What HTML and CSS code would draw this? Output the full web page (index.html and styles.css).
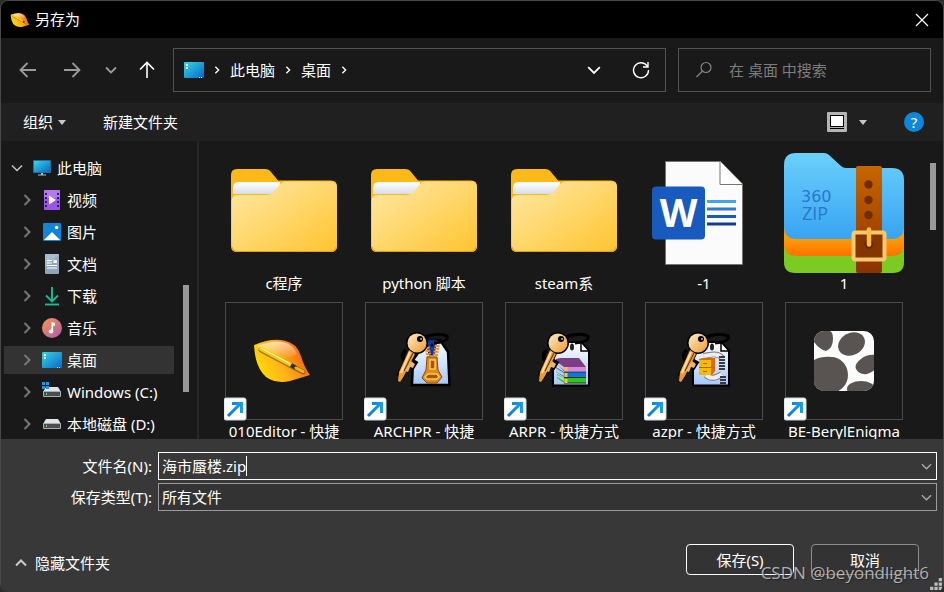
FILE: index.html
```html
<!DOCTYPE html>
<html lang="zh-CN">
<head>
    <meta charset="UTF-8">
    <meta name="viewport" content="width=device-width, initial-scale=1.0">
    <title>另存为</title>
    <link rel="stylesheet" href="styles.css">
</head>
<body>
    <!-- shared icons -->
    <svg class="defs" width="0" height="0" aria-hidden="true">
        <defs>
            <linearGradient id="gFolder" x1="0" y1="0" x2="1" y2="1"><stop offset="0" stop-color="#ffe8a6"/><stop offset="1" stop-color="#ffc530"/></linearGradient>
            <linearGradient id="gPaper" x1="0" y1="0" x2="0" y2="1"><stop offset="0" stop-color="#fff"/><stop offset="1" stop-color="#d5dbe3"/></linearGradient>
            <linearGradient id="gScreen" x1="0" y1="0" x2="1" y2="1"><stop offset="0" stop-color="#35d6e6"/><stop offset="1" stop-color="#0a66c8"/></linearGradient>
            <linearGradient id="gLeaf" x1="0" y1="0.7" x2="1" y2="0.3"><stop offset="0" stop-color="#ffe000"/><stop offset="0.45" stop-color="#ffb21c"/><stop offset="1" stop-color="#f0560c"/></linearGradient>
            <linearGradient id="gShine" x1="0" y1="0" x2="0" y2="1"><stop offset="0" stop-color="#fff" stop-opacity="0.65"/><stop offset="1" stop-color="#fff" stop-opacity="0.05"/></linearGradient>
            <linearGradient id="gKey" x1="0" y1="0" x2="1" y2="1"><stop offset="0" stop-color="#ffeccb"/><stop offset="1" stop-color="#f09a2c"/></linearGradient>
            <linearGradient id="gSheet" x1="0" y1="0" x2="0" y2="1"><stop offset="0" stop-color="#fff"/><stop offset="1" stop-color="#a4c6ff"/></linearGradient>
            <linearGradient id="gZipBlue" x1="0" y1="0" x2="0" y2="1"><stop offset="0" stop-color="#6bd0fb"/><stop offset="1" stop-color="#38a4f2"/></linearGradient>
            <linearGradient id="gStrap" x1="0" y1="0" x2="0" y2="1"><stop offset="0" stop-color="#c76600"/><stop offset="1" stop-color="#8a3200"/></linearGradient>
            <linearGradient id="gOrange" x1="0" y1="0.5" x2="0" y2="1"><stop offset="0" stop-color="#ff9a08"/><stop offset="1" stop-color="#ff7200"/></linearGradient>
            <linearGradient id="gArrow" x1="0" y1="0" x2="1" y2="0"><stop offset="0" stop-color="#0b7cd8"/><stop offset="1" stop-color="#1b9be8"/></linearGradient>
        </defs>
        <symbol id="folder" viewBox="0 0 120 120">
            <path d="M7 94V22q0-6 6-6h28q4 0 6 3l7 8.500h53q6 0 6 6V93q0 6-6 6H13q-6 0-6-6z" fill="#fdb917"/>
            <path d="M9 42v-7q0-6 5-6h42v12H9z" fill="url(#gPaper)"/>
            <path d="M7.500 49q0-7 6-7h29q4 0 7-3l5-6q3-4.500 7-4.500h45.500q6 0 6 6V92q0 6-6 6H13.500q-6 0-6-6z" fill="url(#gFolder)"/>
            <path d="M8 94q1 4.500 6 4.500h92q5 0 6-4.500" fill="none" stroke="#e5a01b"/>
        </symbol>
        <symbol id="leaf" viewBox="28 36 60 48">
            <path d="M30 44Q47 37 60 39.500Q73 42 77 55Q80 66 86 74Q76 77 66 80Q52 83 42 76Q31 66 30 44z" fill="url(#gLeaf)"/>
            <path d="M33 45Q48 39 59 41Q69 43 73 53Q60 61 40 52z" fill="url(#gShine)"/>
            <path d="M37 49L79 71" stroke="#8a5200" stroke-width="5" stroke-linecap="round" opacity="0.7"/>
            <path d="M37 48L67 64" stroke="#eccb1d" stroke-width="4" stroke-linecap="round"/>
            <path d="M37 47L66 62.500" stroke="#fff58a" stroke-width="1.200"/>
            <path d="M67 64L72 67" stroke="#24303c" stroke-width="4"/>
            <path d="M72 67L79 70.500" stroke="#e9b71b" stroke-width="3" stroke-linecap="round"/>
        </symbol>
        <symbol id="key" viewBox="0 0 120 120">
            <path d="M62 36q14-5 22-1q2 6-13 7" fill="none" stroke="#000" stroke-width="3"/>
            <path d="M43 49q-6 5-1 11" fill="none" stroke="#000" stroke-width="4"/>
            <path d="M50 50L37 76M47 67l5-8" stroke="#000" stroke-width="8"/>
            <circle cx="54" cy="42" r="11" fill="#000"/>
            <path d="M46 49l6 4-11 22-4 6-2-1 1-9z" fill="#ec9a31"/>
            <path d="M47 51L38 72" stroke="#ffe0ad" stroke-width="2"/>
            <path d="M50 52L41 70" stroke="#4b2b0a" stroke-width="1"/>
            <path d="M48 60l4 3-2 4-3-1-2 5-3-1z" fill="#e8b57a"/>
            <circle cx="54" cy="42" r="9.500" fill="url(#gKey)"/>
            <circle cx="57" cy="38" r="3" fill="#000"/>
            <circle cx="58" cy="38" r="1" fill="#bbb"/>
        </symbol>
        <symbol id="shortcut" viewBox="0 0 120 120">
            <rect x="0" y="97" width="22" height="22" rx="2" fill="#fff" stroke="#cfd6df"/>
            <path d="M4 115L16 103M8 102.500h9.500v9.500" fill="none" stroke="url(#gArrow)" stroke-width="3"/>
        </symbol>
        <symbol id="desktop" viewBox="0 0 20 16">
            <rect width="20" height="16" rx="1" fill="url(#gScreen)"/>
            <path d="M2 2h2v2H2zM2 5h2v2H2z" fill="#fff"/>
            <path d="M15 15h1v1h-1zM17 15h1v1h-1z" fill="#fff"/>
        </symbol>
        <symbol id="drive" viewBox="0 0 20 20">
            <path d="M4 5h12l3 5H1z" fill="#e1e4e8"/>
            <rect x="1" y="9" width="18" height="6" rx="1" fill="#a9acb0"/>
            <rect x="2" y="10" width="16" height="4" fill="#4b4d50"/>
            <rect x="4" y="11" width="1" height="2" fill="#4be05a"/>
        </symbol>
        <symbol id="chevron" viewBox="0 0 12 12">
            <path d="M3.500 1L8.500 6L3.500 11" fill="none" stroke="currentColor" stroke-width="2"/>
        </symbol>
        <symbol id="down" viewBox="0 0 12 12">
            <path d="M1 3.500L6 8.500L11 3.500" fill="none" stroke="currentColor" stroke-width="1.500"/>
        </symbol>
    </svg>

    <div class="dialog">
        <header class="titlebar">
            <svg class="app-icon"><use href="#leaf"/></svg>
            <h1>另存为</h1>
            <button class="close" aria-label="关闭">
                <svg width="14" height="14" viewBox="0 0 14 14"><path d="M1 1l12 12M13 1L1 13" stroke="#fff" stroke-width="1.200"/></svg>
            </button>
        </header>

        <div class="navbar">
            <div class="nav-buttons">
                <button class="muted" aria-label="后退"><svg width="18" height="18" viewBox="0 0 18 18"><path d="M17 9H2M8.500 2L1.500 9l7 7" fill="none" stroke="currentColor" stroke-width="1.800"/></svg></button>
                <button class="muted" aria-label="前进"><svg width="18" height="18" viewBox="0 0 18 18"><path d="M1 9h15M9.500 2l7 7-7 7" fill="none" stroke="currentColor" stroke-width="1.800"/></svg></button>
                <button class="muted narrow" aria-label="最近位置"><svg width="12" height="12" viewBox="0 0 12 12"><path d="M1 3.500L6 8.500L11 3.500" fill="none" stroke="currentColor" stroke-width="1.800"/></svg></button>
                <button aria-label="向上"><svg width="18" height="18" viewBox="0 0 18 18"><path d="M9 17V2M2 8.500l7-7 7 7" fill="none" stroke="currentColor" stroke-width="1.600"/></svg></button>
            </div>
            <div class="address">
                <svg width="20" height="16"><use href="#desktop"/></svg>
                <svg class="crumb-arrow"><use href="#chevron"/></svg>
                <button>此电脑</button>
                <svg class="crumb-arrow"><use href="#chevron"/></svg>
                <button>桌面</button>
                <svg class="crumb-arrow"><use href="#chevron"/></svg>
                <button class="history" aria-label="历史"><svg width="14" height="14"><use href="#down"/></svg></button>
                <button class="refresh" aria-label="刷新"><svg width="18" height="18" viewBox="0 0 18 18"><path d="M15.500 5.500A7.500 7.500 0 1 0 16.500 9M16 1v5h-5" fill="none" stroke="#fff" stroke-width="1.400"/></svg></button>
            </div>
            <label class="search">
                <svg width="18" height="18" viewBox="0 0 18 18"><circle cx="11" cy="6.500" r="5" fill="none" stroke="#858585" stroke-width="1.200"/><path d="M7.500 10L1.500 16" stroke="#858585" stroke-width="1.200"/></svg>
                <input type="text" placeholder="在 桌面 中搜索" aria-label="在 桌面 中搜索">
            </label>
        </div>

        <div class="toolbar">
            <button>组织<span class="caret"></span></button>
            <button>新建文件夹</button>
            <button class="view" aria-label="视图">
                <svg width="20" height="20" viewBox="0 0 20 20"><rect width="20" height="20" rx="1" fill="#b4b4b4"/><rect x="3.500" y="3.500" width="13" height="11" fill="#fff" stroke="#000"/><path d="M3 16.500h14" stroke="#000"/></svg>
                <span class="caret"></span>
            </button>
            <button class="help" aria-label="帮助">?</button>
        </div>

        <main class="content">
            <nav class="sidebar">
                <ul class="tree">
                    <li class="root"><svg class="twist"><use href="#down"/></svg>
                        <svg class="icon" viewBox="0 0 20 20"><rect x="1" y="2" width="18" height="13" rx="1" fill="#1c6f9f"/><rect x="2" y="3" width="16" height="11" fill="url(#gScreen)"/><path d="M9 15h2v1.500h3v1H6v-1h3z" fill="#b3bcc4"/></svg>
                        <a href="#">此电脑</a></li>
                    <li><svg class="twist"><use href="#chevron"/></svg>
                        <svg class="icon" viewBox="0 0 20 20"><rect x="2" width="16" height="20" rx="1" fill="#9a57e8"/><path d="M2 1q0-1 1-1h14q1 0 1 1v7H2z" fill="#b07af2"/><path d="M4 3v15M16 3v15" stroke="#3a1a6e" stroke-width="2" stroke-dasharray="2 2"/><path d="M7 5.500l7 4.500-7 4.500z" fill="#fff"/></svg>
                        <a href="#">视频</a></li>
                    <li><svg class="twist"><use href="#chevron"/></svg>
                        <svg class="icon" viewBox="0 0 20 20"><rect x="1" y="1" width="18" height="18" rx="1" fill="#1484d6"/><path d="M2 18L10 10l8 8z" fill="#fff"/><circle cx="14.500" cy="5.500" r="1.700" fill="#fff"/></svg>
                        <a href="#">图片</a></li>
                    <li><svg class="twist"><use href="#chevron"/></svg>
                        <svg class="icon" viewBox="0 0 20 20"><rect x="3" width="14" height="20" rx="1" fill="#8fa6bd"/><path d="M3 1q0-1 1-1h12q1 0 1 1L3 13z" fill="#a9bbcc"/><path d="M5 6.500h5M5 9h5M5 11.500h10M5 14h10" stroke="#fff" stroke-width="1.200"/><rect x="11.500" y="6" width="3.500" height="3" fill="#fff"/></svg>
                        <a href="#">文档</a></li>
                    <li><svg class="twist"><use href="#chevron"/></svg>
                        <svg class="icon" viewBox="0 0 20 20"><path d="M10 1v14M4 9.500l6 6 6-6" fill="none" stroke="#20b893" stroke-width="1.900"/><path d="M3 18.500h14" stroke="#20b893" stroke-width="1.900"/></svg>
                        <a href="#">下载</a></li>
                    <li><svg class="twist"><use href="#chevron"/></svg>
                        <svg class="icon" viewBox="0 0 20 20"><defs><linearGradient id="gMusic" x1="0" y1="0" x2="1" y2="1"><stop offset="0.100" stop-color="#f59256"/><stop offset="1" stop-color="#a45bb0"/></linearGradient></defs><circle cx="10" cy="10" r="10" fill="url(#gMusic)"/><ellipse cx="9" cy="13.500" rx="2.300" ry="2" fill="#fff"/><path d="M9.500 4l3.500 1v3l-2-.6v6.100H9.500z" fill="#fff"/></svg>
                        <a href="#">音乐</a></li>
                    <li class="selected"><svg class="twist"><use href="#chevron"/></svg>
                        <svg class="icon" viewBox="0 0 20 20"><use href="#desktop" y="2" width="20" height="16"/></svg>
                        <a href="#">桌面</a></li>
                    <li><svg class="twist"><use href="#chevron"/></svg>
                        <svg class="icon" viewBox="0 0 20 20"><use href="#drive" width="20" height="20"/><path d="M0 0h3v3H0zM4 0h3v3H4zM0 4h3v3H0zM4 4h3v3H4z" fill="#1b97e6"/></svg>
                        <a href="#">Windows (C:)</a></li>
                    <li><svg class="twist"><use href="#chevron"/></svg>
                        <svg class="icon" viewBox="0 0 20 20"><use href="#drive" width="20" height="20"/></svg>
                        <a href="#">本地磁盘 (D:)</a></li>
                </ul>
                <div class="scrollbar side-scroll"><div class="thumb"></div></div>
            </nav>

            <section class="files">
                <figure>
                    <svg class="thumbnail"><use href="#folder"/></svg>
                    <figcaption>c程序</figcaption>
                </figure>
                <figure>
                    <svg class="thumbnail"><use href="#folder"/></svg>
                    <figcaption>python 脚本</figcaption>
                </figure>
                <figure>
                    <svg class="thumbnail"><use href="#folder"/></svg>
                    <figcaption>steam系</figcaption>
                </figure>
                <figure>
                    <svg class="thumbnail" viewBox="0 0 120 120">
                        <path d="M21.500 8.500h55L98.500 31v80.500h-77z" fill="#fbfbfb" stroke="#76746f"/>
                        <path d="M76 8.500V31.500h22.500" fill="#fff" stroke="#76746f"/>
                        <path d="M63 48.500h29" stroke="#41a5ee" stroke-width="3"/>
                        <path d="M63 56h29" stroke="#2b7cd3" stroke-width="3"/>
                        <path d="M63 63.500h29" stroke="#185abd" stroke-width="3"/>
                        <path d="M63 71h29" stroke="#103f91" stroke-width="3"/>
                        <rect x="8" y="33.500" width="53" height="53" rx="4" fill="#185abd"/>
                        <text class="word-letter" x="34.500" y="74" text-anchor="middle">W</text>
                    </svg>
                    <figcaption>-1</figcaption>
                </figure>
                <figure>
                    <svg class="thumbnail" viewBox="0 0 120 120">
                        <path d="M0 70h120v39q0 11-11 11H11q-11 0-11-11z" fill="#7ccb22"/>
                        <path d="M0 70h120v21q0 12-13 12H13Q0 103 0 91z" fill="url(#gOrange)"/>
                        <path d="M0 12Q0 0 12 0h28q3 0 5 2l12 11q2 2 5 2h46q12 0 12 12v46q0 13-13 13H13Q0 86 0 73z" fill="url(#gZipBlue)"/>
                        <text class="zip-360" x="17" y="49">360</text>
                        <text class="zip-name" x="18" y="67">ZIP</text>
                        <rect x="72" y="13" width="26" height="107" rx="2" fill="url(#gStrap)"/>
                        <g fill="#702b00"><circle cx="84.500" cy="31.500" r="4.200"/><circle cx="84.500" cy="47" r="4.200"/><circle cx="84.500" cy="62" r="4.200"/></g>
                        <rect x="69.500" y="79.500" width="31" height="27" rx="2" fill="#843600" stroke="#fdc76c" stroke-width="4"/>
                        <circle cx="85" cy="91" r="4.500" fill="#642600"/>
                        <path d="M85 76.500v15" stroke="#f9bd45" stroke-width="4.500" stroke-linecap="round"/>
                    </svg>
                    <figcaption>1</figcaption>
                </figure>
                <figure>
                    <svg class="thumbnail framed" viewBox="0 0 120 120">
                        <use href="#leaf" x="28" y="36" width="60" height="48"/>
                        <use href="#shortcut" width="120" height="120"/>
                    </svg>
                    <figcaption>010Editor - 快捷</figcaption>
                </figure>
                <figure>
                    <svg class="thumbnail framed" viewBox="0 0 120 120">
                        <path d="M48 84l1-25 14-20h13l8 12 1.500 33z" fill="url(#gSheet)" stroke="#000" stroke-width="2.500"/>
                        <path d="M62 39h11l-3 15h-5z" fill="#123c9c" stroke="#071a4c"/>
                        <path d="M63 46l2 10M74 41l-3 15" stroke="#e8932b" stroke-width="5" stroke-dasharray="2 1"/>
                        <path d="M63 56h10l1 13 4 7-5 6H63l-5-5 4-8z" fill="#e58a1a" stroke="#8c4a08"/>
                        <path d="M66 59h5v9h-5zM64 73h9l2 3-2 2H63l-2-2z" fill="#a3560e" stroke="#ffc95a" stroke-width="1.500"/>
                        <use href="#key" x="-1" width="120" height="120"/>
                        <circle cx="68" cy="44" r="1.500" fill="#000"/>
                        <use href="#shortcut" width="120" height="120"/>
                    </svg>
                    <figcaption>ARCHPR - 快捷</figcaption>
                </figure>
                <figure>
                    <svg class="thumbnail framed" viewBox="0 0 120 120">
                        <path d="M49 84.500V48l8-7h20l8 9v34.500z" fill="url(#gSheet)" stroke="#000" stroke-width="2"/>
                        <path d="M77 42v8h7" fill="#fff" stroke="#000" stroke-width="1.500"/>
                        <path d="M52 58l4-1h19l7 9v4H60l-8-7z" fill="#7b3f87"/>
                        <path d="M60 66h22v4H60z" fill="#e184d8"/>
                        <path d="M52 66l8 5h22v5H60l-8-5z" fill="#1378d8"/>
                        <path d="M53 73l7 4h22v5H60l-7-5z" fill="#32c80e"/>
                        <path d="M52 60l8 6v3l-8-5zM52 67l8 5v3l-8-4zM53 74l7 3v3l-7-4z" fill="#c6c9d5"/>
                        <path d="M60 71h22M60 76.500h22M60 82h22" stroke="#252843"/>
                        <path d="M62 66v4M62 72v4M62 78v4" stroke="#ffc43c" stroke-width="3"/>
                        <use href="#key" width="120" height="120"/>
                        <ellipse cx="68" cy="46" rx="2" ry="3.500" fill="#222"/>
                        <use href="#shortcut" width="120" height="120"/>
                    </svg>
                    <figcaption>ARPR - 快捷方式</figcaption>
                </figure>
                <figure>
                    <svg class="thumbnail framed" viewBox="0 0 120 120">
                        <path d="M49 84.500V48l8-7h20l8 9v34.500z" fill="url(#gSheet)" stroke="#000" stroke-width="2"/>
                        <path d="M77 42v8h7" fill="#fff" stroke="#000" stroke-width="1.500"/>
                        <path d="M60 55q14-4 18 2M62 74q6 6 16-1" fill="none" stroke="#777" stroke-width="6"/>
                        <path d="M60 55q14-4 18 2M62 74q6 6 16-1" fill="none" stroke="#ededed" stroke-width="4"/>
                        <path d="M78 55v14M79 75v9" stroke="#383a42" stroke-width="6" stroke-dasharray="2 1"/>
                        <path d="M55 58l4-1h12v13l-3 4H55z" fill="#d96a00"/>
                        <rect x="55" y="59" width="12" height="15" fill="#f7ba05"/>
                        <path d="M55 66.500h12M59 62.500h4M59 70.500h4" stroke="#a96500"/>
                        <use href="#key" width="120" height="120"/>
                        <ellipse cx="68" cy="46" rx="2" ry="3.500" fill="#222"/>
                        <use href="#shortcut" width="120" height="120"/>
                    </svg>
                    <figcaption>azpr - 快捷方式</figcaption>
                </figure>
                <figure>
                    <svg class="thumbnail framed" viewBox="0 0 120 120">
                        <clipPath id="tile"><rect x="30" y="30" width="60" height="60" rx="10"/></clipPath>
                        <g clip-path="url(#tile)">
                            <rect x="30" y="30" width="60" height="60" fill="#fcfcfc"/>
                            <g fill="#595452">
                                <path d="M28 30h18q3 1 3 8 0 9-7 12-6-1-12-9z"/>
                                <ellipse cx="67.500" cy="43" rx="14" ry="11" transform="rotate(-28 67.500 43)"/>
                                <ellipse cx="46" cy="74" rx="18" ry="18"/>
                                <path d="M28 60q8-5 20-4 10 1 14 10 3 8-2 16l-7 10H28z"/>
                                <path d="M92 54q-9-1-15 4-7 5-5 10 3 6 11 5 5-2 9-5z"/>
                                <ellipse cx="77" cy="88" rx="14" ry="8"/>
                            </g>
                        </g>
                        <use href="#shortcut" width="120" height="120"/>
                    </svg>
                    <figcaption>BE-BerylEnigma</figcaption>
                </figure>
            </section>
            <div class="scrollbar file-scroll"><div class="thumb"></div></div>
        </main>

        <footer class="footer">
            <div class="field-row">
                <label for="filename">文件名(N):</label>
                <div class="combo active">
                    <input type="text" id="filename" value="海市蜃楼.zip">
                    <span class="cursor"></span>
                    <svg class="combo-arrow"><use href="#down"/></svg>
                </div>
            </div>
            <div class="field-row">
                <label for="filetype">保存类型(T):</label>
                <div class="combo">
                    <select id="filetype"><option>所有文件</option></select>
                    <svg class="combo-arrow"><use href="#down"/></svg>
                </div>
            </div>
            <div class="actions">
                <button class="hide-folders"><svg width="12" height="12" viewBox="0 0 12 12"><path d="M1 8.500L6 3.500L11 8.500" fill="none" stroke="#ccc" stroke-width="2"/></svg>隐藏文件夹</button>
                <button class="btn primary">保存(S)</button>
                <button class="btn">取消</button>
            </div>
            <span class="watermark">CSDN @beyondlight6</span>
            <svg class="grip" viewBox="0 0 12 12"><path d="M9 1h3v3H9zM5 5h3v3H5zM9 5h3v3H9zM1 9h3v3H1zM5 9h3v3H5zM9 9h3v3H9z" fill="#bdbdbd"/></svg>
        </footer>
    </div>
</body>
</html>
```

FILE: styles.css
```css
* {
    box-sizing: border-box;
}
body {
    margin: 0;
    background: #2b2b2b;
    color: #fff;
    font-family: "Noto Sans", "Noto Sans CJK SC", sans-serif;
    font-size: 15px;
    line-height: 20px;
}
button, input, select {
    font: inherit;
    color: inherit;
    background: none;
    border: none;
    padding: 0;
    margin: 0;
    outline: none;
}
button {
    cursor: pointer;
}
svg {
    display: block;
    flex-shrink: 0;
}
.defs {
    position: absolute;
}
.dialog {
    display: flex;
    flex-direction: column;
    height: 100vh;
    border: 1px solid #484848;
    border-bottom: none;
    border-radius: 8px;
    overflow: hidden;
    background: #191919;
}

/* title bar */
.titlebar {
    display: flex;
    align-items: center;
    gap: 5px;
    height: 37px;
    padding: 0 14px 0 9px;
    background: #000;
}
.app-icon {
    width: 20px;
    height: 16px;
}
.titlebar h1 {
    margin: 0;
    padding-bottom: 2px;
    font-size: 15px;
    font-weight: normal;
}
.close {
    margin-left: auto;
}

/* navigation */
.navbar {
    display: flex;
    gap: 12px;
    padding: 10px 12px 11px 18px;
}
.nav-buttons {
    display: flex;
    align-items: center;
    gap: 26px;
    width: 142px;
}
.nav-buttons .narrow {
    margin: 0 -5px 0 -2px;
}
.muted {
    color: #9a9a9a;
}
.address, .search {
    display: flex;
    align-items: center;
    height: 44px;
    border: 1px solid #535353;
}
.address {
    flex: 1;
    gap: 9px;
    padding: 0 15px 0 10px;
}
.address button {
    padding-bottom: 1px;
}
.crumb-arrow {
    width: 8px;
    height: 8px;
}
.history {
    margin-left: auto;
    margin-right: 22px;
}
.search {
    width: 253px;
    gap: 16px;
    padding: 0 16px;
}
.search input {
    flex: 1;
    min-width: 0;
}
.search input::placeholder {
    color: #7d7d7d;
    opacity: 1;
}

/* toolbar */
.toolbar {
    display: flex;
    align-items: center;
    gap: 37px;
    height: 38px;
    padding: 0 19px 0 22px;
    background: #202020;
}
.toolbar button {
    display: flex;
    align-items: center;
    gap: 5px;
}
.caret {
    border: 4px solid transparent;
    border-top: 5px solid #c8c8c8;
    border-bottom: none;
}
.toolbar .view {
    margin-left: auto;
    gap: 12px;
}
.toolbar .help {
    justify-content: center;
    width: 20px;
    height: 20px;
    border-radius: 50%;
    background: #0e86db;
}

/* main area */
.content {
    display: flex;
    flex: 1;
    min-height: 0;
    overflow: hidden;
}
.sidebar {
    display: flex;
    width: 198px;
    border-right: 2px solid #262626;
}
.tree {
    display: flex;
    flex-direction: column;
    flex: 1;
    gap: 4px;
    margin: 0;
    padding: 13px 0 0 3px;
    list-style: none;
}
.tree li {
    display: flex;
    align-items: center;
    flex-shrink: 0;
    gap: 5px;
    height: 28px;
    padding-left: 17px;
}
.tree .root {
    padding-left: 7px;
}
.tree .selected {
    background: #333;
}
.tree a {
    color: #fff;
    text-decoration: none;
    white-space: nowrap;
}
.twist {
    width: 12px;
    height: 12px;
    margin-right: 4px;
    color: #777;
}
.root .twist {
    color: #c4c4c4;
}
.icon {
    width: 20px;
    height: 20px;
}
.scrollbar .thumb {
    width: 6px;
    background: #999;
}
.side-scroll {
    padding: 144px 8px 0 9px;
}
.side-scroll .thumb {
    height: 107px;
}
.file-scroll {
    padding: 22px 7px 0 8px;
}
.file-scroll .thumb {
    height: 67px;
}
.files {
    display: grid;
    flex: 1;
    grid-template-columns: repeat(auto-fill, 140px);
    align-content: start;
    row-gap: 8px;
    padding: 12px 0 0 15px;
}
.files figure {
    display: flex;
    flex-direction: column;
    align-items: center;
    margin: 0;
}
.thumbnail {
    width: 120px;
    height: 120px;
}
.framed {
    background-image: linear-gradient(#191919, #191919), linear-gradient(#4b4b4b, #4b4b4b);
    background-position: center;
    background-repeat: no-repeat;
    background-size: 116px 116px, 118px 118px;
}
.files figcaption {
    height: 20px;
    white-space: nowrap;
}
.word-letter {
    font: bold 39px "Open Sans", sans-serif;
    fill: #fff;
}
.zip-360 {
    font: 16px "DejaVu Sans", sans-serif;
    fill: #2878cc;
}
.zip-name {
    font: 18px "Open Sans", sans-serif;
    fill: #2878cc;
}

/* footer */
.footer {
    position: relative;
    display: flex;
    flex-direction: column;
    gap: 3px;
    padding: 13px 6px 17px 0;
    background: #383838;
}
.field-row {
    display: flex;
    align-items: center;
    gap: 6px;
}
.field-row label {
    width: 151px;
    text-align: right;
}
.combo {
    display: flex;
    align-items: center;
    flex: 1;
    height: 28px;
    padding: 0 4px 0 3px;
    border: 1px solid #9b9b9b;
    background: #333;
}
.combo.active {
    border-color: #fff;
    background: #383838;
}
.combo input {
    field-sizing: content;
}
.combo select {
    flex: 1;
    appearance: none;
}
.cursor {
    width: 1px;
    height: 20px;
    background: #fff;
}
.combo-arrow {
    width: 11px;
    height: 11px;
    margin-left: auto;
    color: #aaa;
}
.actions {
    display: flex;
    align-items: flex-end;
    gap: 17px;
    padding: 30px 18px 0 14px;
}
.hide-folders {
    display: flex;
    align-items: center;
    gap: 8px;
    margin-right: auto;
    padding-bottom: 2px;
}
.btn {
    width: 108px;
    height: 31px;
    border: 1px solid #8e8e8e;
    border-radius: 4px;
    background: #333;
}
.btn.primary {
    border-color: #fff;
}
.watermark {
    position: absolute;
    right: 14px;
    bottom: 9px;
    color: rgba(210, 210, 210, 0.8);
    font-family: "Open Sans", sans-serif;
    font-size: 17px;
    text-shadow: 1px 1px 1px #222;
}
.grip {
    position: absolute;
    right: 1px;
    bottom: 2px;
    width: 13px;
    height: 13px;
}
```
